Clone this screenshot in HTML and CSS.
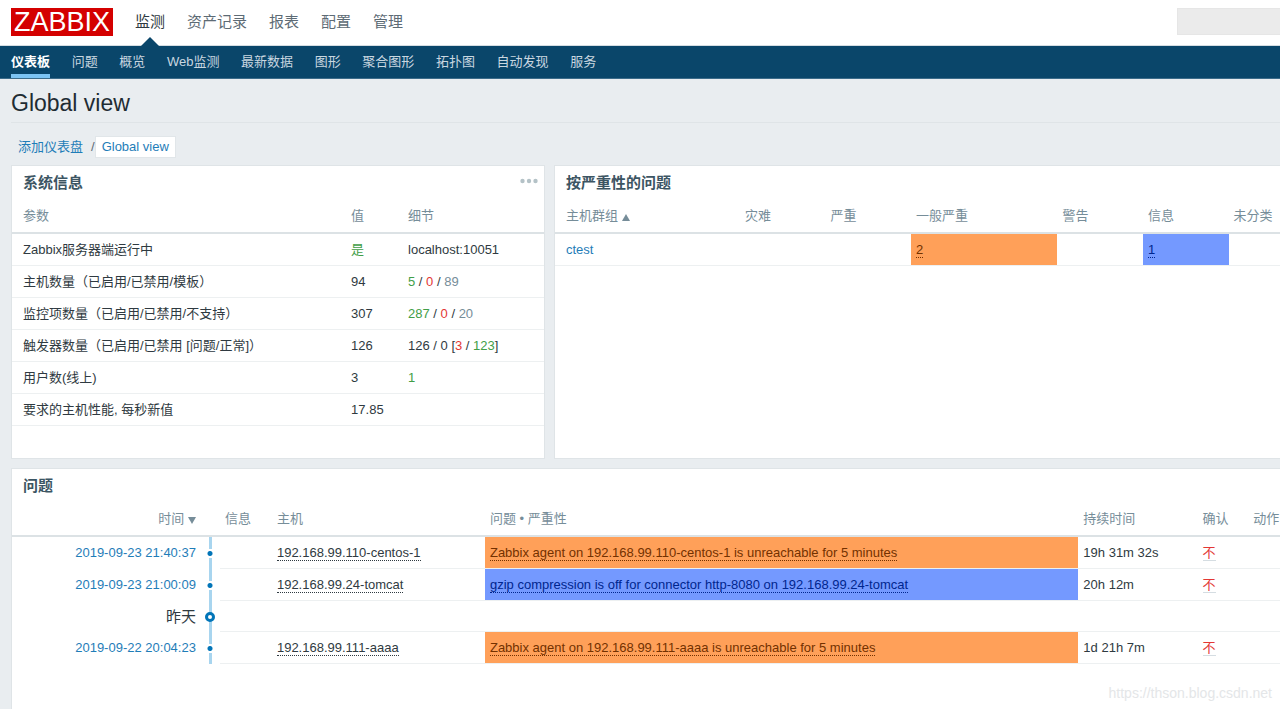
FILE: index.html
```html
<!DOCTYPE html>
<html lang="zh-CN">
<head>
<meta charset="utf-8">
<meta name="viewport" content="width=device-width, initial-scale=1">
<title>Global view</title>
<link rel="stylesheet" href="styles.css">
</head>
<body>
<header class="top">
  <a class="logo" href="#">ZABBIX</a>
  <nav class="main-nav" aria-label="主菜单">
    <a class="current" href="#">监测</a>
    <a href="#">资产记录</a>
    <a href="#">报表</a>
    <a href="#">配置</a>
    <a href="#">管理</a>
  </nav>
  <input class="search" type="text" aria-label="搜索">
</header>
<nav class="sub-nav" aria-label="子菜单">
  <a class="current" href="#">仪表板</a>
  <a href="#">问题</a>
  <a href="#">概览</a>
  <a href="#">Web监测</a>
  <a href="#">最新数据</a>
  <a href="#">图形</a>
  <a href="#">聚合图形</a>
  <a href="#">拓扑图</a>
  <a href="#">自动发现</a>
  <a href="#">服务</a>
</nav>
<main class="page">
  <h1 class="page-title">Global view</h1>
  <div class="crumbs">
    <a href="#">添加仪表盘</a>
    <span class="slash">/</span>
    <a class="crumb-current" href="#">Global view</a>
  </div>
  <div class="dashboard">
    <section class="widget">
      <div class="widget-head">
        <h2>系统信息</h2>
        <button class="more" type="button" aria-label="操作">
          <svg width="18" height="6" viewBox="0 0 18 6"><circle cx="2.5" cy="3" r="2.2"/><circle cx="9" cy="3" r="2.2"/><circle cx="15.5" cy="3" r="2.2"/></svg>
        </button>
      </div>
      <table class="grid-table info-table">
        <colgroup><col class="i-name"><col class="i-value"><col></colgroup>
        <thead><tr><th>参数</th><th>值</th><th>细节</th></tr></thead>
        <tbody>
          <tr><td>Zabbix服务器端运行中</td><td><span class="green">是</span></td><td>localhost:10051</td></tr>
          <tr><td>主机数量（已启用/已禁用/模板）</td><td>94</td><td><span class="green">5</span> / <span class="red">0</span> / <span class="grey">89</span></td></tr>
          <tr><td>监控项数量（已启用/已禁用/不支持）</td><td>307</td><td><span class="green">287</span> / <span class="red">0</span> / <span class="grey">20</span></td></tr>
          <tr><td>触发器数量（已启用/已禁用 [问题/正常]）</td><td>126</td><td>126 / 0 [<span class="red">3</span> / <span class="green">123</span>]</td></tr>
          <tr><td>用户数(线上)</td><td>3</td><td><span class="green">1</span></td></tr>
          <tr><td>要求的主机性能, 每秒新值</td><td>17.85</td><td></td></tr>
        </tbody>
      </table>
    </section>
    <section class="widget cut">
      <div class="widget-head"><h2>按严重性的问题</h2></div>
      <table class="grid-table">
        <colgroup><col class="s-group"><col class="s-col"><col class="s-col"><col class="s-wide"><col class="s-col"><col class="s-col"><col></colgroup>
        <thead><tr><th>主机群组 <span class="arrow up"></span></th><th>灾难</th><th>严重</th><th>一般严重</th><th>警告</th><th>信息</th><th>未分类</th></tr></thead>
        <tbody>
          <tr><td><a href="#">ctest</a></td><td></td><td></td><td class="average"><a class="dotted" href="#">2</a></td><td></td><td class="information"><a class="dotted" href="#">1</a></td><td></td></tr>
        </tbody>
      </table>
    </section>
    <section class="widget cut problems">
      <div class="widget-head"><h2>问题</h2></div>
      <table class="grid-table timeline-table">
        <colgroup><col class="p-time"><col class="p-line"><col class="p-info"><col class="p-host"><col class="p-problem"><col class="p-duration"><col class="p-ack"><col></colgroup>
        <thead><tr><th class="time">时间 <span class="arrow down"></span></th><th></th><th>信息</th><th>主机</th><th>问题 • 严重性</th><th>持续时间</th><th>确认</th><th>动作</th></tr></thead>
        <tbody>
          <tr><td class="time"><a href="#">2019-09-23 21:40:37</a></td><td class="line"><i class="dot"></i></td><td></td><td><a class="dotted" href="#">192.168.99.110-centos-1</a></td><td class="average"><a class="dotted" href="#">Zabbix agent on 192.168.99.110-centos-1 is unreachable for 5 minutes</a></td><td>19h 31m 32s</td><td><a class="ack" href="#">不</a></td><td></td></tr>
          <tr><td class="time"><a href="#">2019-09-23 21:00:09</a></td><td class="line"><i class="dot"></i></td><td></td><td><a class="dotted" href="#">192.168.99.24-tomcat</a></td><td class="information"><a class="dotted" href="#">gzip compression is off for connector http-8080 on 192.168.99.24-tomcat</a></td><td>20h 12m</td><td><a class="ack" href="#">不</a></td><td></td></tr>
          <tr class="day"><td class="time"><h4>昨天</h4></td><td class="line"><i class="ring"></i></td><td colspan="6"></td></tr>
          <tr><td class="time"><a href="#">2019-09-22 20:04:23</a></td><td class="line"><i class="dot"></i></td><td></td><td><a class="dotted" href="#">192.168.99.111-aaaa</a></td><td class="average"><a class="dotted" href="#">Zabbix agent on 192.168.99.111-aaaa is unreachable for 5 minutes</a></td><td>1d 21h 7m</td><td><a class="ack" href="#">不</a></td><td></td></tr>
        </tbody>
      </table>
    </section>
  </div>
</main>
<div class="watermark">https://thson.blog.csdn.net</div>
</body>
</html>
```

FILE: styles.css
```css
* { box-sizing: border-box; }

body {
  margin: 0;
  min-height: 100vh;
  display: flex;
  flex-direction: column;
  position: relative;
  background: #e9edf0;
  color: #2f3a41;
  font: 13px/18px "Liberation Sans", "Noto Sans CJK SC", sans-serif;
}

a { color: #1f7db8; text-decoration: none; }
h1, h2, h4 { margin: 0; }

/* header */
.top {
  display: flex;
  align-items: center;
  height: 46px;
  padding-left: 11px;
  background: #fff;
  border-bottom: 1px solid #d5dde2;
}
.logo {
  height: 28px;
  padding: 0 3px;
  margin-bottom: 1px;
  background: #d40000;
  color: #fff;
  font-size: 27px;
  line-height: 28px;
}
.main-nav {
  display: flex;
  align-self: stretch;
  gap: 22px;
  margin-left: 22px;
  font-size: 15px;
  line-height: 44px;
}
.main-nav a { color: #5d6b75; position: relative; }
.main-nav .current { color: #2f3a41; }
.main-nav .current::after {
  content: "";
  position: absolute;
  bottom: -1px;
  left: 50%;
  margin-left: -9px;
  border: 9px solid transparent;
  border-top: 0;
  border-bottom-color: #0a466a;
}
.search {
  width: 103px;
  height: 27px;
  margin: 0 0 2px auto;
  border: 1px solid #e6e6e6;
  border-right: 0;
  background: #ebebeb;
}

.sub-nav {
  height: 33px;
  padding-left: 11px;
  background: #0a466a;
  border-bottom: 1px solid #3c6c8a;
  white-space: nowrap;
  overflow: hidden;
}
.sub-nav a {
  display: inline-block;
  height: 32px;
  margin-right: 18px;
  color: #c9d7e0;
  line-height: 32px;
}
.sub-nav .current {
  color: #fff;
  font-weight: bold;
  border-bottom: 4px solid #7cc3f2;
}

/* page */
.page {
  flex: 1;
  display: flex;
  flex-direction: column;
  padding-left: 11px;
}
.page-title {
  padding: 12px 0 7px;
  border-bottom: 1px solid #dfe4e7;
  font-size: 23px;
  font-weight: normal;
  line-height: 24px;
  color: #1f2c33;
}
.crumbs {
  display: flex;
  align-items: center;
  padding: 13px 0 7px 7px;
}
.slash { margin-left: 8px; color: #5d6b75; }
.crumb-current {
  padding: 1px 6px;
  background: #fff;
  border: 1px solid #e1e6e9;
}

.dashboard {
  flex: 1;
  display: grid;
  grid-template-columns: 534fr 726fr;
  grid-template-rows: 294px 1fr;
  gap: 9px;
}
.widget {
  min-width: 0;
  background: #fff;
  border: 1px solid #dfe4e7;
  overflow: hidden;
}
.cut { border-right: 0; }
.problems { grid-column: 1 / -1; border-bottom: 0; }
.widget-head {
  display: flex;
  justify-content: space-between;
  height: 34px;
  padding: 7px 6px 0 11px;
}
.widget-head h2 {
  font-size: 15px;
  line-height: 20px;
  color: #3c5563;
}
.more {
  height: 16px;
  padding: 0;
  border: 0;
  background: none;
  line-height: 0;
}
.more svg { fill: #b4c2c7; }

/* tables */
.grid-table {
  width: 100%;
  table-layout: fixed;
  border-collapse: separate;
  border-spacing: 0;
  white-space: nowrap;
}
.grid-table th {
  height: 34px;
  padding: 0 0 0 5px;
  border-bottom: 2px solid #dce2e5;
  text-align: left;
  font-weight: normal;
  color: #768d99;
}
.grid-table td {
  height: 32px;
  padding: 0 0 0 5px;
  border-bottom: 1px solid #edf0f1;
}
.grid-table th:first-child, .grid-table td:first-child { padding-left: 11px; }

.i-name { width: 62.8%; }
.i-value { width: 10.7%; }
.s-group { width: 25.5%; }
.s-col { width: 11.8%; }
.s-wide { width: 20.2%; }
.p-time { width: 14.9%; }
.p-line { width: 1.5%; }
.p-info { width: 4.1%; }
.p-host { width: 16.8%; }
.p-problem { width: 46.8%; }
.p-duration { width: 9.4%; }
.p-ack { width: 4%; }

.green { color: #429e47; }
.red { color: #e33734; }
.grey { color: #768d99; }

.arrow {
  display: inline-block;
  border: 4px solid transparent;
  vertical-align: -1px;
}
.up { border-top: 0; border-bottom: 7px solid #768d99; }
.down { border-bottom: 0; border-top: 7px solid #768d99; }

.dotted { color: inherit; border-bottom: 1px dotted; }
.grid-table .average { background: #ffa059; color: #733100; }
.grid-table .information { background: #7499ff; color: #00268e; }
.ack { color: #e33734; border-bottom: 1px solid #d5dde2; }

/* timeline */
.grid-table .time { text-align: right; padding-right: 5px; }
.timeline-table td.time, .timeline-table td.line { border-bottom: 0; }
.timeline-table .line {
  padding: 0;
  background: linear-gradient(#a8d5ef, #a8d5ef) center / 3px 100% no-repeat;
}
.timeline-table .day td { height: 31px; }
.day h4 { font-size: 15px; font-weight: normal; }
.dot {
  display: block;
  width: 8px;
  height: 9px;
  margin: 0 auto;
  background: radial-gradient(circle, #0275b8 2px, #fff 3px);
}
.ring {
  display: block;
  width: 10px;
  height: 10px;
  margin: 0 auto;
  border: 3px solid #0275b8;
  border-radius: 50%;
  background: #fff;
}

.watermark {
  position: absolute;
  right: 8px;
  bottom: 7px;
  color: #e4e6e8;
  font-size: 14px;
}
```
